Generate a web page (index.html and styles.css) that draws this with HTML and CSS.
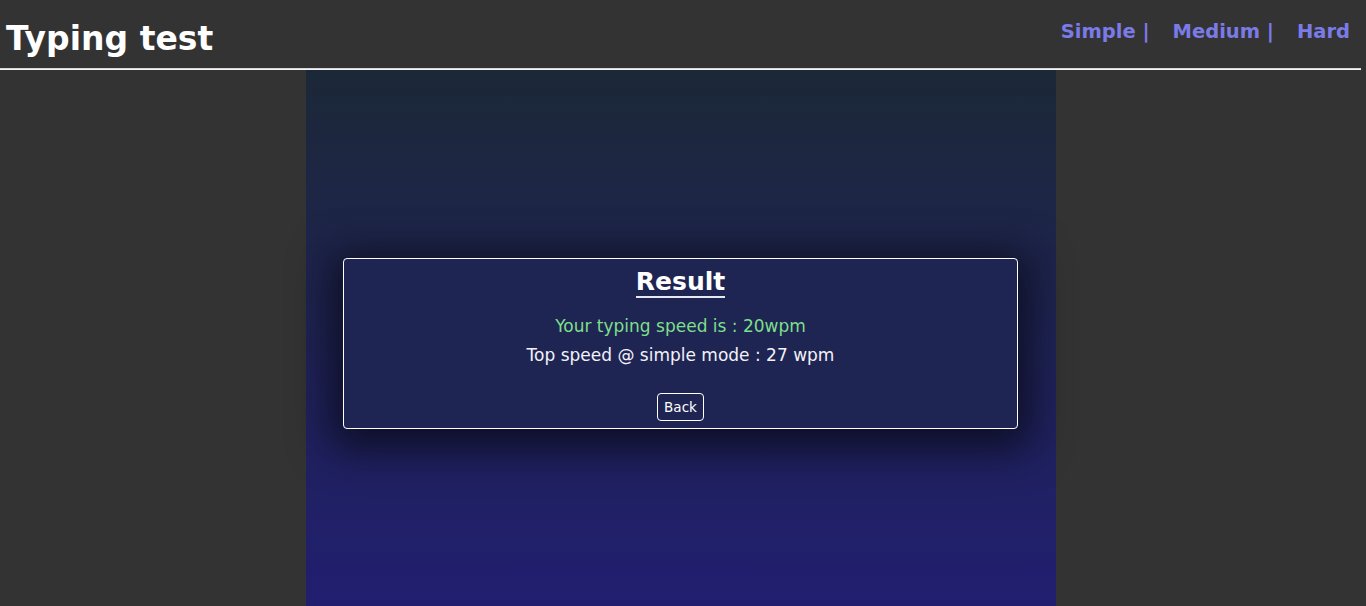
FILE: index.html
```html
<!DOCTYPE html>
<html>
<head>
<meta charset="utf-8">
<title>Typing test</title>
<link rel="stylesheet" href="styles.css">
</head>
<body>
<header class="top">
  <h1 class="brand">Typing test</h1>
  <nav class="modes">
    <a class="mode" href="#">Simple |</a>
    <a class="mode" href="#">Medium |</a>
    <a class="mode" href="#">Hard</a>
  </nav>
</header>
<div class="rule"></div>
<main class="stage">
  <section class="card">
    <h2 class="card-title">Result</h2>
    <p class="speed">Your typing speed is : 20wpm</p>
    <p class="top-speed">Top speed @ simple mode : 27 wpm</p>
    <button class="back">Back</button>
  </section>
</main>
</body>
</html>
```

FILE: styles.css
```css
html, body {
  margin: 0;
  padding: 0;
  height: 100%;
}
body {
  background: #333333;
  font-family: "DejaVu Sans", Verdana, sans-serif;
  color: #fff;
  display: flex;
  flex-direction: column;
  overflow: hidden;
}
.top {
  height: 68px;
  display: flex;
  justify-content: space-between;
  align-items: flex-start;
}
.brand {
  margin: 0;
  padding: 19px 0 0 6px;
  font-size: 33px;
  font-weight: bold;
  line-height: 40px;
  color: #fff;
}
.modes {
  padding: 19px 16px 0 0;
  display: flex;
  gap: 23px;
}
.mode {
  color: #7b7be8;
  font-weight: bold;
  font-size: 19.5px;
  line-height: 26px;
  text-decoration: none;
}
.rule {
  height: 0;
  width: 1361px;
  border-top: 1px solid #d8d8d8;
  border-bottom: 1px solid #f4f4f4;
}
.stage {
  flex: 1;
  width: 750px;
  margin-left: 306px;
  background: linear-gradient(to bottom, #1b2837 0%, #1f2452 45%, #211e70 100%);
  display: flex;
  justify-content: center;
  align-items: flex-start;
  padding-top: 188px;
  padding-right: 1px;
  box-sizing: border-box;
}
.card {
  width: 673px;
  height: 169px;
  border: 1px solid #ffffff;
  border-radius: 4px;
  background: #1f2553;
  box-shadow: 0 8px 40px 12px rgba(8, 8, 20, 0.75);
  text-align: center;
  box-sizing: content-box;
}
.card-title {
  margin: 8px 0 0;
  font-size: 25px;
  line-height: 29px;
  font-weight: bold;
  display: inline-block;
  border-bottom: 2px solid #e8e8f0;
  padding-bottom: 0;
}
.speed {
  margin: 18px 0 0;
  color: #7ddf8a;
  font-size: 17px;
  line-height: 20px;
}
.top-speed {
  margin: 9px 0 0;
  color: #f2f2f8;
  font-size: 17px;
  line-height: 20px;
}
.back {
  margin-top: 28px;
  font-family: "DejaVu Sans", Verdana, sans-serif;
  font-size: 13.5px;
  color: #fff;
  background: transparent;
  border: 1px solid #fff;
  border-radius: 4px;
  padding: 6px 6px 5px;
  line-height: 15px;
}
```
